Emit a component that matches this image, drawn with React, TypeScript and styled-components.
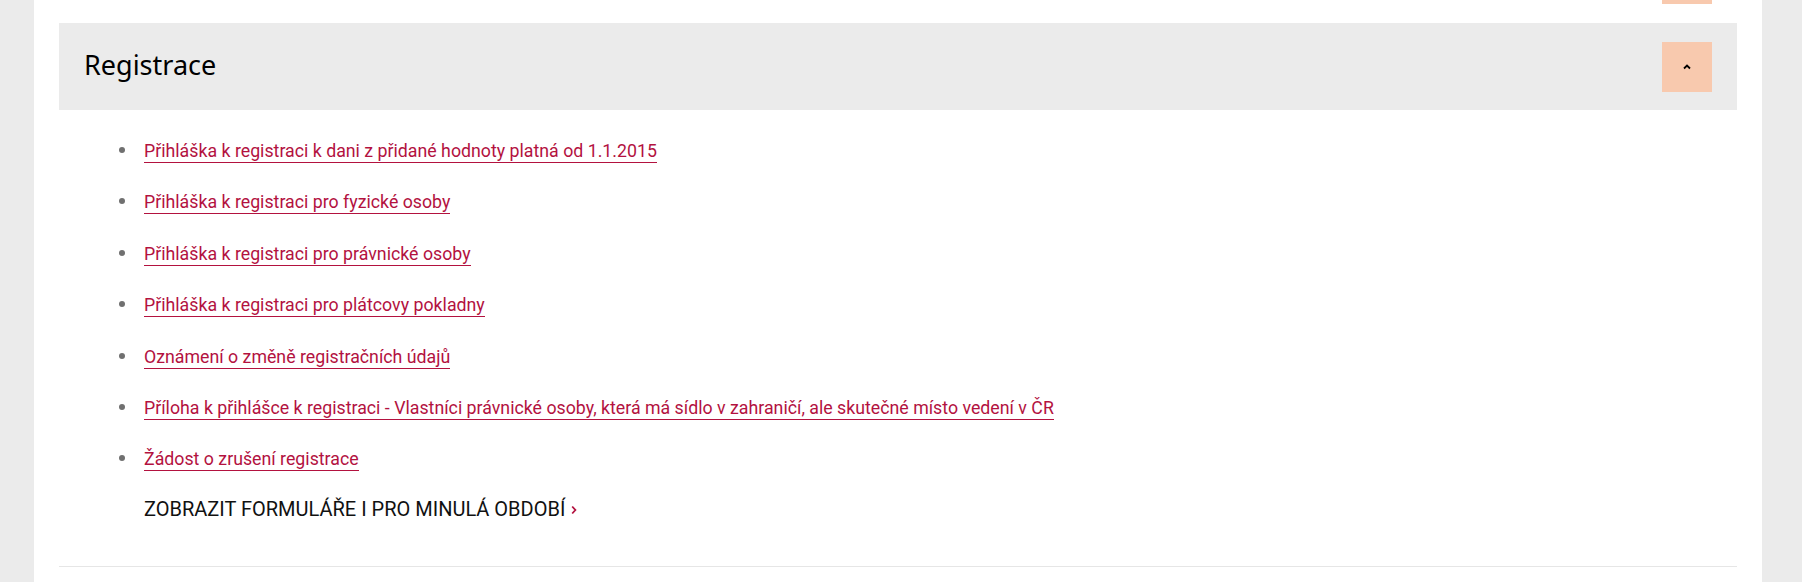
import { createGlobalStyle, styled } from "styled-components";

const COLOR = {
  page: "#ebebeb",
  panel: "#ffffff",
  header: "#ebebeb",
  toggle: "#f8c9ae",
  link: "#b3123f",
  bullet: "#707070",
  text: "#111111",
  rule: "#e6e6e6",
};

const GlobalStyle = createGlobalStyle`
  html, body {
    margin: 0;
    padding: 0;
    background: ${COLOR.page};
    font-family: Roboto, "Liberation Sans", Arial, sans-serif;
  }
`;

const Panel = styled.main`
  margin-left: 34px;
  width: 1728px;
  min-height: 582px;
  background: ${COLOR.panel};
  padding: 0 25px;
  box-sizing: border-box;
`;

const PrevTail = styled.div`
  display: flex;
  justify-content: flex-end;
  height: 4px;
  padding-right: 25px;

  span {
    width: 50px;
    background: ${COLOR.toggle};
  }
`;

const Section = styled.section`
  margin-top: 19px;
  border-bottom: 1px solid ${COLOR.rule};
  padding-bottom: 43px;
`;

const Header = styled.header`
  display: flex;
  align-items: center;
  justify-content: space-between;
  height: 87px;
  padding: 0 25px 0 25px;
  background: ${COLOR.header};

  h2 {
    margin: 0 0 4px;
    font-family: "Noto Sans", "Open Sans", sans-serif;
    font-weight: 400;
    font-size: 27px;
    color: #000;
  }
`;

const Toggle = styled.button`
  display: flex;
  align-items: center;
  justify-content: center;
  width: 50px;
  height: 50px;
  padding: 0;
  border: 0;
  background: ${COLOR.toggle};
  cursor: pointer;
`;

const Links = styled.ul`
  margin: 28px 0 0;
  padding-left: 85px;
  list-style: none;

  li {
    font-size: 17.75px;
    line-height: 27.7px;
    margin-bottom: 23.7px;
  }

  li::before {
    content: "";
    display: inline-block;
    width: 6px;
    height: 6px;
    border-radius: 50%;
    background: ${COLOR.bullet};
    margin: 0 19px 0 -25px;
    vertical-align: 4px;
  }

  li:last-child {
    margin-bottom: 0;
  }

  a {
    color: ${COLOR.link};
    text-decoration: none;
    border-bottom: 1px solid ${COLOR.link};
    padding-bottom: 1px;
  }
`;

const More = styled.a`
  display: flex;
  align-items: center;
  gap: 6px;
  width: fit-content;
  margin: 21px 0 0 85px;
  color: ${COLOR.text};
  font-size: 20px;
  line-height: 28px;
  text-transform: uppercase;
  text-decoration: none;

  svg {
    margin-top: 2px;
  }
`;

const items = [
  "Přihláška k registraci k dani z přidané hodnoty platná od 1.1.2015",
  "Přihláška k registraci pro fyzické osoby",
  "Přihláška k registraci pro právnické osoby",
  "Přihláška k registraci pro plátcovy pokladny",
  "Oznámení o změně registračních údajů",
  "Příloha k přihlášce k registraci - Vlastníci právnické osoby, která má sídlo v zahraničí, ale skutečné místo vedení v ČR",
  "Žádost o zrušení registrace",
];

const App = (): JSX.Element => {
  return (
    <>
      <GlobalStyle />
      <Panel>
        <PrevTail>
          <span />
        </PrevTail>
        <Section>
          <Header>
            <h2>Registrace</h2>
            <Toggle aria-label="Sbalit">
              <svg width="8" height="6" viewBox="0 0 8 6">
                <polyline points="1,4.5 4,1.5 7,4.5" fill="none" stroke="#000" strokeWidth="1.8" />
              </svg>
            </Toggle>
          </Header>
          <Links>
            {items.map((item) => (
              <li key={item}>
                <a href="#">{item}</a>
              </li>
            ))}
          </Links>
          <More href="#">
            Zobrazit formuláře i pro minulá období
            <svg width="6" height="10" viewBox="0 0 6 10">
              <polyline points="1.2,1.5 4.4,5 1.2,8.5" fill="none" stroke={COLOR.link} strokeWidth="1.8" />
            </svg>
          </More>
        </Section>
      </Panel>
    </>
  );
};
export default App;
